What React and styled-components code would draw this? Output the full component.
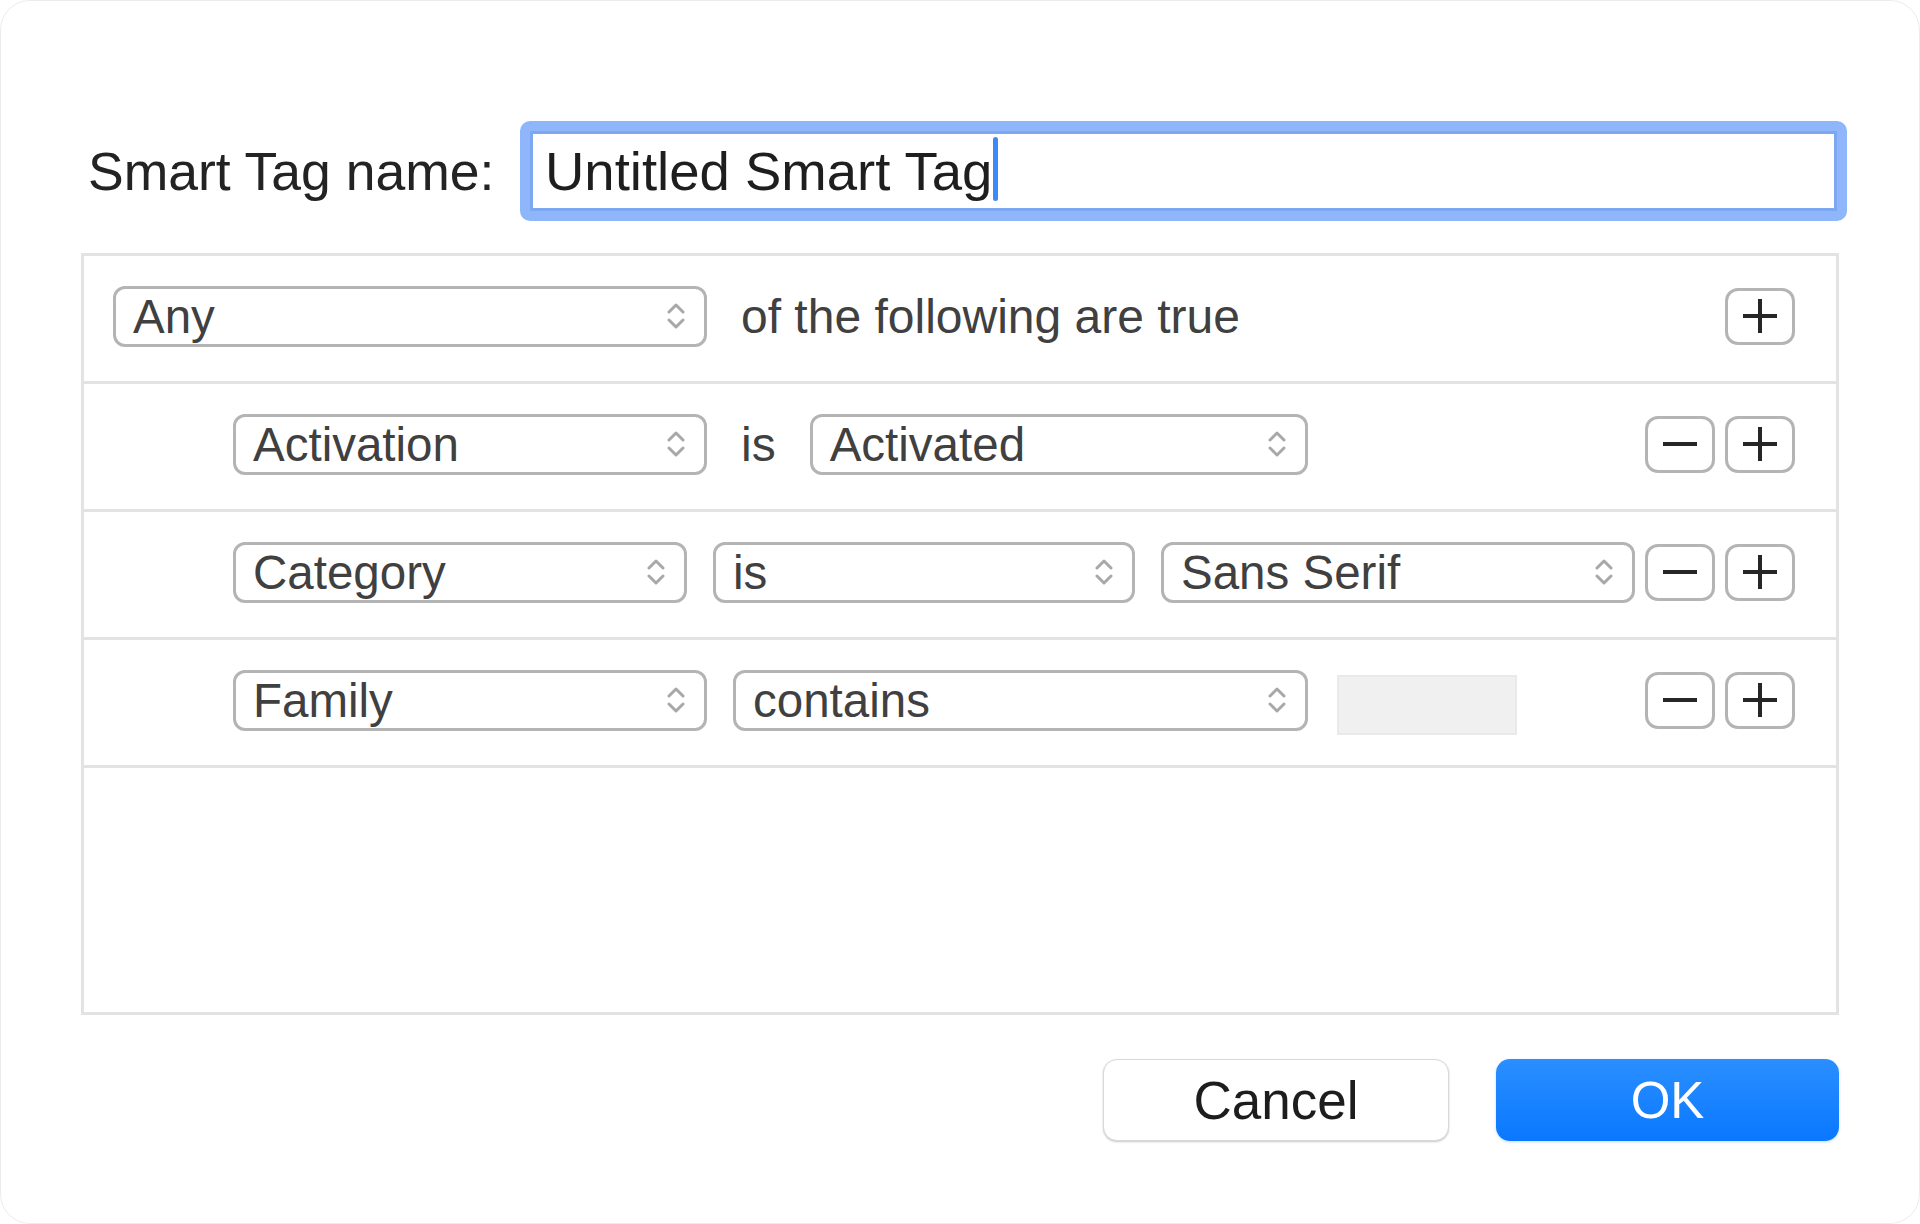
import { createGlobalStyle, styled } from "styled-components";

const GlobalStyle = createGlobalStyle`
  html, body {
    margin: 0;
    padding: 0;
    background: #ffffff;
  }
  * {
    box-sizing: border-box;
  }
`;

const Window = styled.div`
  width: 1920px;
  height: 1224px;
  background: #fff;
  border: 1px solid #ececec;
  border-radius: 30px;
  padding: 120px 80px 0 80px;
  font-family: "Liberation Sans", Arial, sans-serif;
  display: flex;
  flex-direction: column;
  overflow: hidden;
`;

const Header = styled.div`
  display: flex;
  align-items: center;
`;

const Label = styled.label`
  flex: none;
  width: 439px;
  padding-left: 7px;
  font-size: 53.5px;
  color: #232323;
`;

const FocusRing = styled.div`
  flex: 1;
  margin-right: -8px;
  padding: 10px;
  border-radius: 10px;
  background: #8fb6fa;
`;

const NameField = styled.div`
  height: 80px;
  background: #fff;
  border: 3px solid #7ea7f1;
  padding-left: 12px;
  display: flex;
  align-items: center;
  font-size: 54.5px;
  color: #1e1e1e;
  white-space: pre;
`;

const Caret = styled.span`
  display: inline-block;
  width: 5px;
  height: 64px;
  margin: 0 0 4px 1px;
  border-radius: 3px;
  background: #3b8af7;
`;

const Panel = styled.div`
  margin-top: 32px;
  height: 762px;
  border: 3px solid #e3e3e3;
  display: flex;
  flex-direction: column;
`;

const Row = styled.div`
  height: 128px;
  border-bottom: 3px solid #e3e3e3;
  display: flex;
  align-items: center;
  padding: 0 41px 5px ${(p) => (p.$nested ? 149 : 29)}px;
`;

const Controls = styled.div`
  flex: 1;
  display: flex;
  align-items: center;
  gap: 26px;
`;

const Select = styled.div`
  flex: none;
  width: ${(p) => p.$width}px;
  height: 61px;
  border: 3px solid #b4b4b4;
  border-radius: 12px;
  background: #fff;
  padding: 0 19px 0 17px;
  display: flex;
  align-items: center;
  justify-content: space-between;
  font-size: 47.5px;
  color: #404040;
`;

const Word = styled.span`
  font-size: 48px;
  color: #404040;
  margin: 0 8px;
`;

const SearchField = styled.div`
  width: 180px;
  height: 60px;
  margin: 10px 0 0 3px;
  background: #f0f0f0;
  border: 2px solid #e9e9e9;
`;

const StepGroup = styled.div`
  flex: none;
  margin-left: 9px;
  display: flex;
  gap: 10px;
`;

const StepButton = styled.button`
  width: 70px;
  height: 57px;
  padding: 0;
  border: 3px solid #b4b4b4;
  border-radius: 13px;
  background: #fff;
  display: flex;
  align-items: center;
  justify-content: center;
`;

const Footer = styled.div`
  margin-top: 44px;
  display: flex;
  justify-content: flex-end;
  gap: 47px;
`;

const DialogButton = styled.button`
  width: ${(p) => (p.$primary ? 343 : 346)}px;
  height: 82px;
  border-radius: 14px;
  font-family: "Liberation Sans", Arial, sans-serif;
  font-size: ${(p) => (p.$primary ? 51 : 53)}px;
  border: ${(p) => (p.$primary ? "none" : "1px solid #d9d9d9")};
  color: ${(p) => (p.$primary ? "#fff" : "#1d1d1d")};
  background: ${(p) =>
    p.$primary ? "linear-gradient(#2a8fff, #0a78ff)" : "#fff"};
  box-shadow: ${(p) =>
    p.$primary
      ? "0 1px 3px rgba(0, 110, 255, 0.25)"
      : "0 1px 2px rgba(0, 0, 0, 0.22)"};
`;

const Chevrons = () => (
  <svg width="18" height="30" viewBox="0 0 18 30" fill="none">
    <path
      d="M2 11 L9 4 L16 11 M2 19 L9 26 L16 19"
      stroke="#a8a8a8"
      strokeWidth="3"
      strokeLinecap="round"
      strokeLinejoin="round"
    />
  </svg>
);

const Popup = ({ width, children }) => (
  <Select $width={width}>
    <span>{children}</span>
    <Chevrons />
  </Select>
);

const Minus = () => (
  <StepButton>
    <svg width="36" height="36" viewBox="0 0 36 36">
      <path d="M1 18 H35" stroke="#262626" strokeWidth="4" />
    </svg>
  </StepButton>
);

const Plus = () => (
  <StepButton>
    <svg width="36" height="36" viewBox="0 0 36 36">
      <path d="M1 18 H35 M18 1 V35" stroke="#262626" strokeWidth="4" />
    </svg>
  </StepButton>
);

export default function App() {
  return (
    <>
      <GlobalStyle />
      <Window>
        <Header>
          <Label>Smart Tag name:</Label>
          <FocusRing>
            <NameField>
              Untitled Smart Tag
              <Caret />
            </NameField>
          </FocusRing>
        </Header>

        <Panel>
          <Row>
            <Controls>
              <Popup width={594}>Any</Popup>
              <Word>of the following are true</Word>
            </Controls>
            <StepGroup>
              <Plus />
            </StepGroup>
          </Row>
          <Row $nested>
            <Controls>
              <Popup width={474}>Activation</Popup>
              <Word>is</Word>
              <Popup width={498}>Activated</Popup>
            </Controls>
            <StepGroup>
              <Minus />
              <Plus />
            </StepGroup>
          </Row>
          <Row $nested>
            <Controls>
              <Popup width={454}>Category</Popup>
              <Popup width={422}>is</Popup>
              <Popup width={474}>Sans Serif</Popup>
            </Controls>
            <StepGroup>
              <Minus />
              <Plus />
            </StepGroup>
          </Row>
          <Row $nested>
            <Controls>
              <Popup width={474}>Family</Popup>
              <Popup width={575}>contains</Popup>
              <SearchField />
            </Controls>
            <StepGroup>
              <Minus />
              <Plus />
            </StepGroup>
          </Row>
        </Panel>

        <Footer>
          <DialogButton>Cancel</DialogButton>
          <DialogButton $primary>OK</DialogButton>
        </Footer>
      </Window>
    </>
  );
}
